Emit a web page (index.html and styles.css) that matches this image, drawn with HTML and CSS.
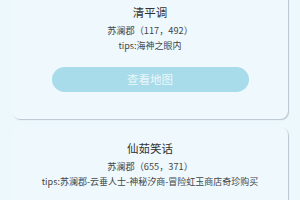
FILE: index.html
```html
<!DOCTYPE html>
<html lang="zh">
<head>
<meta charset="utf-8">
<link rel="stylesheet" href="styles.css">
</head>
<body>
<div class="list">
  <div class="card first">
    <div class="title">清平调</div>
    <div class="pos">苏澜郡（117，492）</div>
    <div class="tips">tips:海神之眼内</div>
    <div class="btn">查看地图</div>
  </div>
  <div class="card">
    <div class="title">仙茹笑话</div>
    <div class="pos">苏澜郡（655，371）</div>
    <div class="tips">tips:苏澜郡-云垂人士-神秘汐商-冒险虹玉商店奇珍购买</div>
  </div>
</div>
</body>
</html>
```

FILE: styles.css
```css
html, body {
  margin: 0;
  padding: 0;
  background: #edf8fc;
  overflow: hidden;
}
body {
  font-family: "Noto Sans CJK SC", "Noto Sans", sans-serif;
  color: #333;
}
.list {
  display: flex;
  flex-direction: column;
  gap: 8px;
  padding: 0 12px;
}
.card {
  background: #eff9fd;
  border-radius: 8px;
  box-shadow: 1px 1px 1px rgba(60, 80, 100, 0.3);
  padding: 11px 0 27px;
  display: flex;
  flex-direction: column;
  align-items: center;
  text-align: center;
}
.card.first {
  margin-top: -9px;
}
.title {
  font-size: 11.5px;
  line-height: 20px;
  color: #333;
}
.pos {
  font-size: 9.2px;
  line-height: 16px;
  color: #444;
}
.tips {
  font-size: 9px;
  line-height: 15px;
  color: #444;
}
.btn {
  margin-top: 14px;
  width: 197px;
  height: 25px;
  border-radius: 13px;
  background: #a8dcea;
  color: #eaf7fb;
  font-size: 11.5px;
  line-height: 25px;
  text-align: center;
}
```
